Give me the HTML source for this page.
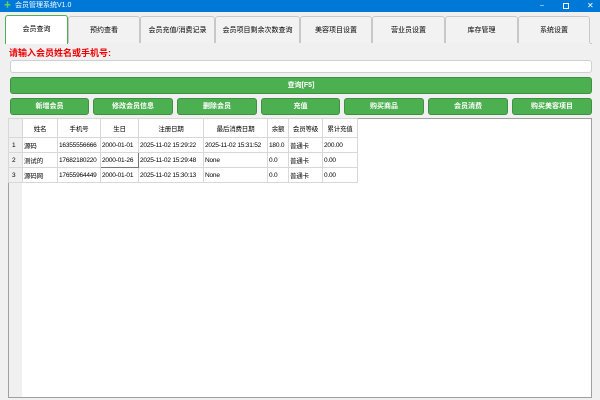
<!DOCTYPE html>
<html><head><meta charset="utf-8"><style>
*{margin:0;padding:0;box-sizing:border-box}
body{width:600px;height:400px;background:#f0f0f0;font-family:"Liberation Sans","Noto Sans CJK SC",sans-serif;font-size:7px;color:#000;position:relative;overflow:hidden}
.abs{position:absolute}
.title{left:0;top:0;width:600px;height:12px;background:#0078d7;color:#fff;font-size:7px;line-height:12px}
.tab{position:absolute;top:16px;height:27px;border:1px solid #c8c8c8;border-bottom:none;border-radius:3px 3px 0 0;background:#f2f2f2;text-align:center;line-height:27px;font-size:7px}
.tab.act{background:#fff;border:1px solid #4caf50;border-bottom:none;top:15px;height:29px}
.btn{position:absolute;background:#4caf50;border:1px solid #3e9142;border-radius:3px;color:#fff;text-align:center;font-size:7px;font-weight:bold}
table{border-collapse:collapse;position:absolute;left:8px;top:118px;background:#fff;table-layout:fixed;width:349px}
td{border:1px solid #d8d8d8;height:15px;padding:0 1px;white-space:nowrap;overflow:hidden;font-size:6.5px;letter-spacing:-0.2px}
tr.h td{height:19px;text-align:center}
td.rh{background:#f0f0f0;padding-left:3px}
</style></head><body>
<div class="abs title"><span style="color:#6c6;margin-left:4px">✚</span><span style="margin-left:4px">会员管理系统V1.0</span>
<span style="position:absolute;left:540px">–</span><span style="position:absolute;left:563px;top:3px;width:6px;height:6px;border:1px solid #fff"></span><span style="position:absolute;left:587px;font-size:8px">✕</span></div>
<div class="tab" style="left:68px;width:72px">预约查看</div>
<div class="tab" style="left:140px;width:75px">会员充值/消费记录</div>
<div class="tab" style="left:215px;width:85px">会员项目剩余次数查询</div>
<div class="tab" style="left:300px;width:72px">美容项目设置</div>
<div class="tab" style="left:372px;width:73px">营业员设置</div>
<div class="tab" style="left:445px;width:73px">库存管理</div>
<div class="tab" style="left:518px;width:72px">系统设置</div>
<div class="tab act" style="left:5px;width:63px">会员查询</div>
<div class="abs" style="left:590px;top:43px;width:2px;border-top:1px solid #c8c8c8"></div>
<div class="abs" style="left:9px;top:46px;color:#e00;font-weight:bold;font-size:9px">请输入会员姓名或手机号:</div>
<div class="abs" style="left:10px;top:60px;width:582px;height:13px;background:#fff;border:1px solid #d0d0d0;border-radius:3px"></div>
<div class="btn" style="left:10px;top:77px;width:582px;height:17px;line-height:15px">查询[F5]</div>
<div class="btn" style="left:10px;top:98px;width:79px;height:17px;line-height:15px">新增会员</div>
<div class="btn" style="left:93px;top:98px;width:80px;height:17px;line-height:15px">修改会员信息</div>
<div class="btn" style="left:177px;top:98px;width:80px;height:17px;line-height:15px">删除会员</div>
<div class="btn" style="left:261px;top:98px;width:79px;height:17px;line-height:15px">充值</div>
<div class="btn" style="left:344px;top:98px;width:80px;height:17px;line-height:15px">购买商品</div>
<div class="btn" style="left:428px;top:98px;width:80px;height:17px;line-height:15px">会员消费</div>
<div class="btn" style="left:512px;top:98px;width:80px;height:17px;line-height:15px">购买美容项目</div>
<div class="abs" style="left:8px;top:118px;width:584px;height:280px;background:#fff;border:1px solid #a0a0a0"></div>
<div class="abs" style="left:9px;top:119px;width:13px;height:278px;background:#f0f0f0"></div>
<table>
<colgroup><col style="width:14px"><col style="width:35px"><col style="width:43px"><col style="width:38px"><col style="width:65px"><col style="width:64px"><col style="width:21px"><col style="width:34px"><col style="width:35px"></colgroup>
<tr class="h"><td class="rh"></td><td>姓名</td><td>手机号</td><td>生日</td><td>注册日期</td><td>最后消费日期</td><td>余额</td><td>会员等级</td><td>累计充值</td></tr>
<tr><td class="rh">1</td><td>源码</td><td>16355556666</td><td>2000-01-01</td><td>2025-11-02 15:29:22</td><td>2025-11-02 15:31:52</td><td>180.0</td><td>普通卡</td><td>200.00</td></tr>
<tr><td class="rh">2</td><td>测试的</td><td>17682180220</td><td style="border:1px solid #777">2000-01-26</td><td>2025-11-02 15:29:48</td><td>None</td><td>0.0</td><td>普通卡</td><td>0.00</td></tr>
<tr><td class="rh">3</td><td>源码网</td><td>17655964449</td><td>2000-01-01</td><td>2025-11-02 15:30:13</td><td>None</td><td>0.0</td><td>普通卡</td><td>0.00</td></tr>
</table>
</body></html>
